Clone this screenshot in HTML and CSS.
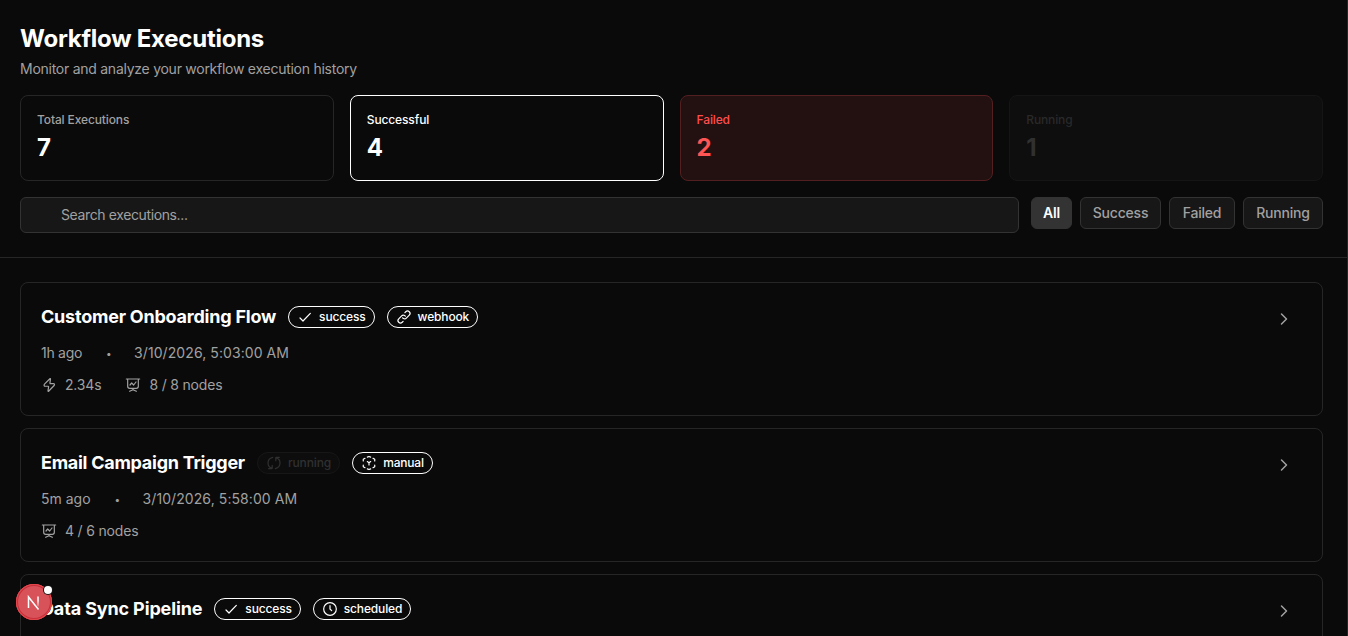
FILE: index.html
```html
<!DOCTYPE html>
<html lang="en">
<head>
  <meta charset="UTF-8" />
  <meta name="viewport" content="width=device-width, initial-scale=1.0">
  <title>Workflow Executions</title>
  <link rel="stylesheet" href="styles.css">
</head>
<body>

<!-- Icon set -->
<svg class="sprite" xmlns="http://www.w3.org/2000/svg">
  <symbol id="tick" viewBox="0 0 24 24"><path d="M4.500 13.500 9 18 20 6.500"/></symbol>
  <symbol id="link" viewBox="0 0 24 24"><path d="M10 13.230c.3.420.690.770 1.140 1.030a3.600 3.600 0 0 0 4.400-.570l4.400-4.390a3.720 3.720 0 0 0-5.260-5.260l-1.350 1.350"/><path d="M14 10.770a3.700 3.700 0 0 0-1.140-1.030 3.600 3.600 0 0 0-4.400.570l-4.400 4.390a3.720 3.720 0 0 0 5.260 5.260l1.350-1.350"/></symbol>
  <symbol id="zap" viewBox="0 0 24 24"><path d="M5.230 10.720 13.300 2.600c.4-.4 1-.1.9.5l-.8 6.100c-.1.5.2.8.6.8h4.600c1.600 0 2.200 1.600 1.100 2.700l-8.300 8.700c-.4.4-1 .1-.9-.5l.9-6.100c.1-.5-.3-.9-.7-.9H6.200c-1.700 0-2.100-1.900-.97-3.180Z"/></symbol>
  <symbol id="board" viewBox="0 0 24 24"><path d="M2 3h20M4 3v11c0 2.500.5 3 3 3h10c2.500 0 3-.5 3-3V3M12 17v2M7 21.500l5-2.500 5 2.500M7.500 12l2.500-3 3 3 3.500-4.500"/></symbol>
  <symbol id="sync" viewBox="0 0 24 24"><path d="M20 3.500h-4.500c-.5 0-.8.300-.8.800V8.500M15 4c3.600 1.100 6 4.500 6 8 0 4-3 7.400-7 8.500M4 20.500h4.500c.5 0 .8-.3.8-.8V15.500M9 20c-3.600-1.100-6-4.500-6-8 0-4 3-7.400 7-8.500"/></symbol>
  <symbol id="cursor" viewBox="0 0 24 24"><path d="M9.500 3.200 12 2.200l2.500 1M18 5l2.600 1.500V9M20.600 15v2.500L18 19M14.500 20.800 12 21.800l-2.500-1M6 19l-2.600-1.500V15M3.400 9V6.500L6 5M9.500 9.800l2.500 1.700 2.500-1.700M12 11.500V15"/></symbol>
  <symbol id="clock" viewBox="0 0 24 24"><circle cx="12" cy="12" r="9.500"/><path d="M12 7v5l2.500 2.500"/></symbol>
  <symbol id="chevron" viewBox="0 0 24 24"><path d="m9 6 6 6-6 6"/></symbol>
</svg>

<main class="page">
  <header class="header">
    <h1>Workflow Executions</h1>
    <p class="subtitle">Monitor and analyze your workflow execution history</p>

    <div class="stats">
      <div class="stat">
        <div class="stat-label">Total Executions</div>
        <div class="stat-value">7</div>
      </div>
      <div class="stat stat-success">
        <div class="stat-label">Successful</div>
        <div class="stat-value">4</div>
      </div>
      <div class="stat stat-failed">
        <div class="stat-label">Failed</div>
        <div class="stat-value">2</div>
      </div>
      <div class="stat stat-running">
        <div class="stat-label">Running</div>
        <div class="stat-value">1</div>
      </div>
    </div>

    <div class="toolbar">
      <input class="search" type="text" placeholder="Search executions...">
      <div class="filters">
        <button class="filter active">All</button>
        <button class="filter filter-success">Success</button>
        <button class="filter filter-failed">Failed</button>
        <button class="filter filter-running">Running</button>
      </div>
    </div>
  </header>

  <section class="list">
    <article class="card">
      <div class="card-body">
        <div class="card-head">
          <h2>Customer Onboarding Flow</h2>
          <span class="badge badge-success"><svg class="icon"><use href="#tick"/></svg><span>success</span></span>
          <span class="badge badge-webhook"><svg class="icon"><use href="#link"/></svg><span>webhook</span></span>
        </div>
        <div class="meta"><span class="ago">1h ago</span><span class="dot">•</span><span class="date">3/10/2026, 5:03:00 AM</span></div>
        <div class="meta">
          <span class="metric"><svg class="icon"><use href="#zap"/></svg><span>2.34s</span></span>
          <span class="metric"><svg class="icon"><use href="#board"/></svg><span>8 / 8 nodes</span></span>
        </div>
      </div>
      <svg class="icon chevron"><use href="#chevron"/></svg>
    </article>

    <article class="card">
      <div class="card-body">
        <div class="card-head">
          <h2 class="tight">Email Campaign Trigger</h2>
          <span class="badge badge-running"><svg class="icon"><use href="#sync"/></svg><span>running</span></span>
          <span class="badge badge-manual"><svg class="icon"><use href="#cursor"/></svg><span>manual</span></span>
        </div>
        <div class="meta"><span>5m ago</span><span class="dot">•</span><span class="date">3/10/2026, 5:58:00 AM</span></div>
        <div class="meta">
          <span class="metric"><svg class="icon"><use href="#board"/></svg><span>4 / 6 nodes</span></span>
        </div>
      </div>
      <svg class="icon chevron"><use href="#chevron"/></svg>
    </article>

    <article class="card">
      <div class="card-body">
        <div class="card-head">
          <h2 class="loose">Data Sync Pipeline</h2>
          <span class="badge badge-success"><svg class="icon"><use href="#tick"/></svg><span>success</span></span>
          <span class="badge badge-scheduled"><svg class="icon"><use href="#clock"/></svg><span>scheduled</span></span>
        </div>
      </div>
      <svg class="icon chevron"><use href="#chevron"/></svg>
    </article>
  </section>
</main>

<!-- Dev tools indicator -->
<div class="dev-badge">
  <svg width="36" height="36" viewBox="0 0 36 36" fill="none">
    <defs>
      <linearGradient id="fade" x1="0" y1="12" x2="0" y2="24" gradientUnits="userSpaceOnUse">
        <stop offset="0.4" stop-color="#fff"/><stop offset="1" stop-color="#fff" stop-opacity="0"/>
      </linearGradient>
    </defs>
    <path d="M12.500 24V13L22.500 25.500" stroke="#fff" stroke-width="1.500"/>
    <path d="M22 12.500v10" stroke="url(#fade)" stroke-width="1.500"/>
  </svg>
  <span class="dev-dot"></span>
</div>

</body>
</html>
```

FILE: styles.css
```css
* { box-sizing: border-box; }
body { margin: 0; height: 100vh; overflow: hidden; background: #0a0a0a; color: #fff; font-family: Inter, "Liberation Sans", sans-serif; font-size: 14px; line-height: 20px; }
h1, h2, p { margin: 0; }
.sprite { display: none; }
.icon { width: 16px; height: 16px; flex: none; fill: none; stroke: currentColor; stroke-width: 1.8; stroke-linecap: round; stroke-linejoin: round; }

.page { height: 636px; overflow: hidden; border-right: 1px solid #262626; }
.header { padding: 23px 24px 24px 20px; border-bottom: 1px solid #262626; }
h1 { font-size: 24px; line-height: 32px; font-weight: 650; letter-spacing: -0.25px; }
.subtitle { margin-top: 4px; color: #a1a1a1; letter-spacing: -0.26px; }

.stats { display: grid; grid-template-columns: repeat(4, 1fr); gap: 16px; margin-top: 16px; }
.stat { padding: 16px; border: 1px solid #262626; border-radius: 8px; }
.stat-label { font-size: 12px; line-height: 16px; font-weight: 500; letter-spacing: -0.12px; color: #a1a1a1; }
.stat-value { margin-top: 4px; font-size: 24px; line-height: 32px; font-weight: 700; }
.stat-success { border-color: #fff; }
.stat-success .stat-label { color: #fff; font-weight: 550; }
.stat-failed { background: #231111; border-color: #541f20; color: #ff5555; }
.stat-failed .stat-label { color: #ff4d4d; }
.stat-running { background: #0e0e0e; border-color: #151515; color: #303030; }
.stat-running .stat-label { color: #292929; }

.toolbar { display: flex; gap: 12px; margin-top: 16px; }
.search { flex: 1; height: 36px; padding: 0 16px 1px 40px; border: 1px solid #333; border-radius: 6px; background: #171717; color: #fff; font: inherit; letter-spacing: -0.38px; }
.search::placeholder { color: #a1a1a1; opacity: 1; }
.filters { display: flex; gap: 8px; }
.filter { height: 32px; padding: 0 11px; border: 1px solid #333; border-radius: 6px; background: #171717; color: #a1a1a1; font: inherit; font-weight: 500; letter-spacing: -0.2px; white-space: nowrap; }
.filter.active { width: 41px; background: #333; color: #fff; font-weight: 600; }
.filter-success { width: 81px; }
.filter-failed { width: 66px; }
.filter-running { width: 80px; }

.list { display: flex; flex-direction: column; gap: 12px; padding: 24px 24px 0 20px; }
.card { display: flex; justify-content: space-between; height: 134px; flex: none; padding: 20px; border: 1px solid #262626; border-radius: 8px; }
.card-body { display: flex; flex-direction: column; gap: 12px; }
.card-head { display: flex; align-items: center; gap: 12px; height: 28px; }
h2 { font-size: 18px; line-height: 28px; font-weight: 650; letter-spacing: -0.22px; white-space: nowrap; }
h2.tight { letter-spacing: -0.27px; }
h2.loose { letter-spacing: -0.14px; }
.badge { display: flex; align-items: center; gap: 6px; height: 22px; padding: 0 8px; border: 1px solid #fff; border-radius: 11px; font-size: 12px; line-height: 16px; font-weight: 550; letter-spacing: -0.15px; }
.badge-manual { letter-spacing: -0.2px; }
.badge-running { border-color: #171717; background: #0d0d0d; color: #303030; letter-spacing: -0.1px; }
.meta { display: flex; align-items: center; gap: 24px; height: 20px; color: #a1a1a1; white-space: nowrap; }
.ago { letter-spacing: -0.28px; }
.date { letter-spacing: 0.08px; }
.metric { display: flex; align-items: center; gap: 8px; letter-spacing: -0.18px; }
.dot { width: 4px; font-size: 10px; }
.chevron { width: 20px; height: 20px; margin: 6px 8px 0 0; color: #a1a1a1; }

.dev-badge { position: fixed; left: 16px; top: 584px; width: 36px; height: 36px; border-radius: 50%; background: #d8525a; box-shadow: inset 0 0 0 1px #e5484d, inset 0 0 0 2px #c5303a; }
.dev-dot { position: absolute; right: 0; top: 2px; width: 8px; height: 8px; border-radius: 50%; background: #fff; box-shadow: 0 0 0 1px #171717; }
```
